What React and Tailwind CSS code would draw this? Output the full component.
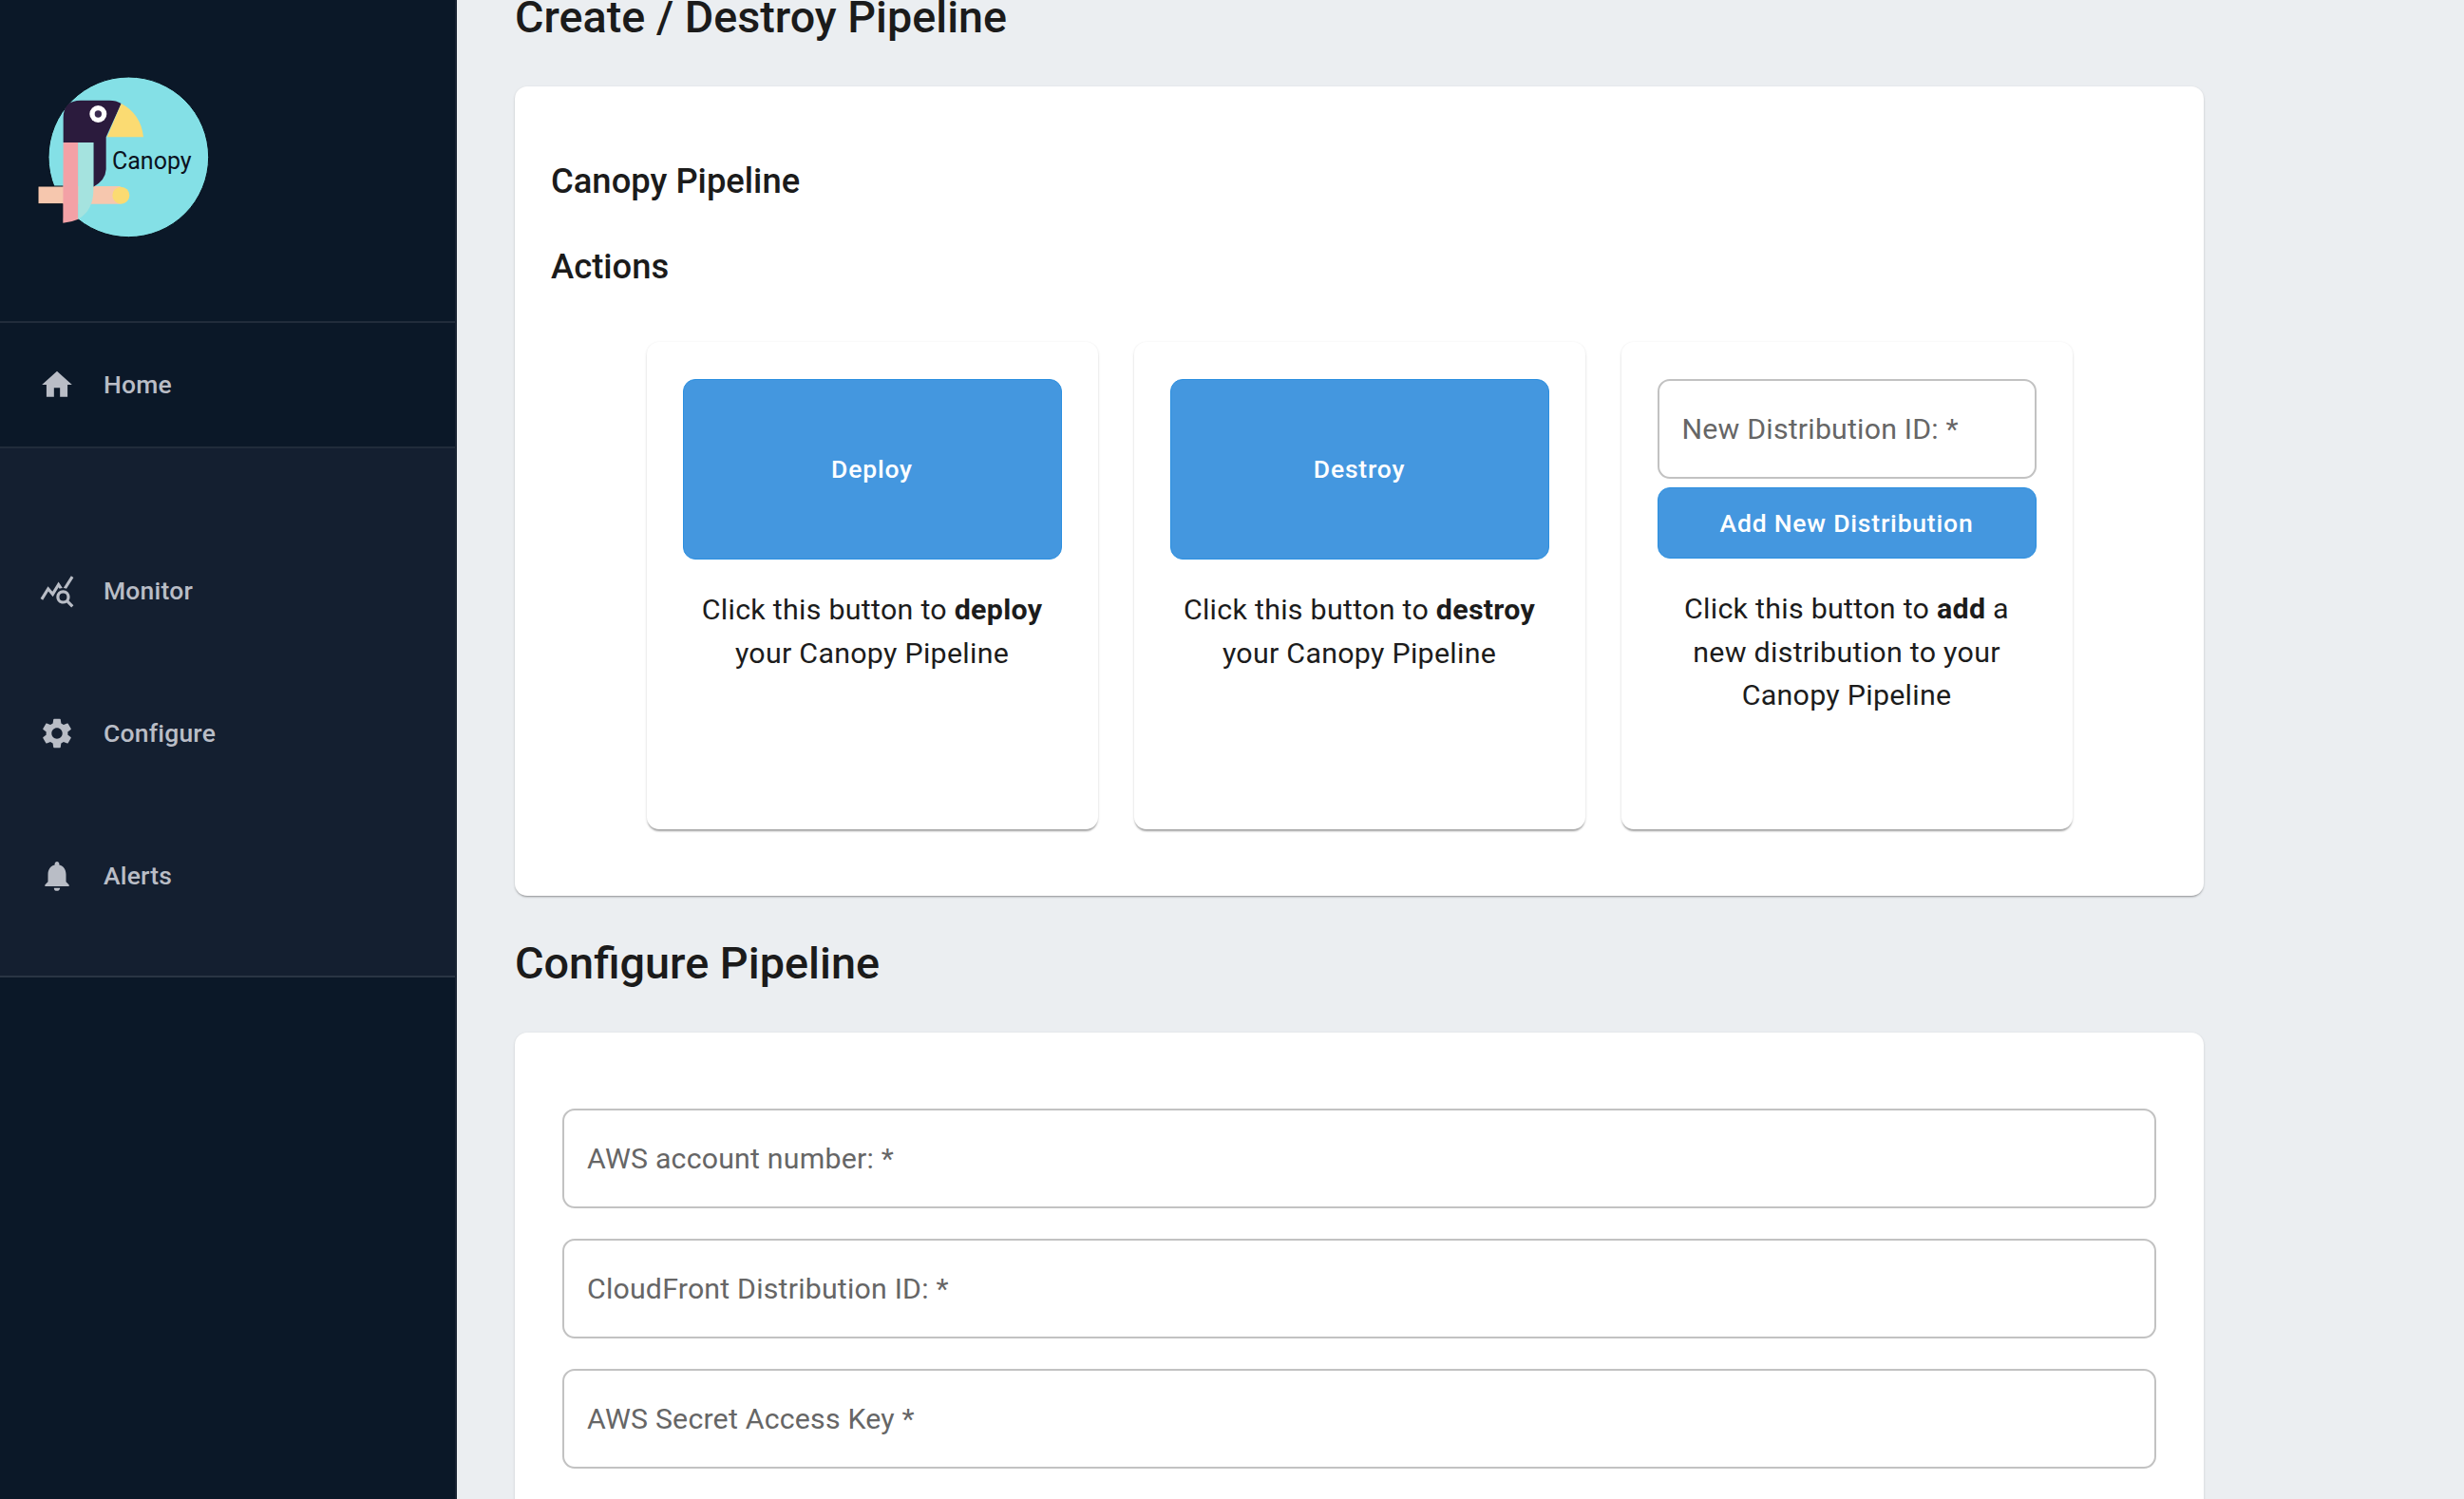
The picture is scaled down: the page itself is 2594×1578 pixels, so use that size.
import { MdHome, MdQueryStats, MdSettings, MdNotifications } from "react-icons/md";

const navItems = [
  { label: "Monitor", icon: MdQueryStats },
  { label: "Configure", icon: MdSettings },
  { label: "Alerts", icon: MdNotifications },
];

const fields = [
  "AWS account number: *",
  "CloudFront Distribution ID: *",
  "AWS Secret Access Key *",
  "",
];

function Logo() {
  return (
    <svg viewBox="0 0 900 720" className="w-[300px] h-[240px]">
      <circle cx="406" cy="376" r="253" fill="#84e0e6" stroke="#05101c" strokeWidth="3" />
      <path d="M120 468H380V524H120Z" fill="#f6c7ae" />
      <path d="M200 468H120V524H200" fill="none" stroke="#05101c" strokeWidth="3" />
      <circle cx="382" cy="497" r="27" fill="#fbdb72" />
      <path d="M200 330V252Q200 197 255 197H345Q368 197 383 207L335 313V415Q333 450 295 470V330Z" fill="#2b1b3d" />
      <path d="M383 207Q445 240 453 313H338Z" fill="#fbdb72" />
      <circle cx="310" cy="240" r="27" fill="#ffffff" />
      <circle cx="310" cy="240" r="11" fill="#3a2a50" />
      <path d="M200 330H247V572Q225 582 199 584Z" fill="#f3a1a6" />
      <path d="M247 330H295V480Q295 545 247 572Z" fill="#a5e3df" />
      <text x="354" y="415" fontFamily="Roboto, sans-serif" fontSize="75" fill="#0b1220">Canopy</text>
    </svg>
  );
}

function NavRow({ item }) {
  const Icon = item.icon;
  return (
    <div className="h-[150px] flex items-center pl-[41px] text-[#b9bdc6]">
      <Icon size={38} className="shrink-0" />
      <span className="ml-[30px] text-[26.5px] font-medium tracking-[0.2px]">{item.label}</span>
    </div>
  );
}

function ActionCard({ children, text }) {
  return (
    <div className="w-[475px] h-[513px] bg-white rounded-[13px] px-[38px] pt-[39px] shadow-[0_3px_2px_-1px_rgba(0,0,0,0.3),0_1px_3px_rgba(0,0,0,0.14)]">
      {children}
      <p className="mt-[30px] px-[6px] text-center text-[30.4px] leading-[45.5px] text-[#1c1c1c] tracking-[0.27px]">
        {text}
      </p>
    </div>
  );
}

function BigButton({ label }) {
  return (
    <button className="w-full h-[190px] rounded-[13px] bg-[#4497df] border border-[#2b8fe0] text-white text-[26.5px] font-medium tracking-[0.8px]">
      {label}
    </button>
  );
}

function Field({ label, className }) {
  return (
    <div className={"flex items-center rounded-[13px] border-2 border-[#c2c2c2] px-[24px] text-[30.3px] text-[#666666] tracking-[0.2px] " + className}>
      {label}
    </div>
  );
}

export default function App() {
  return (
    <div className="flex h-[1578px] overflow-hidden bg-[#ebeef1] font-['Roboto',sans-serif]">
      <aside className="w-[481px] shrink-0 bg-[#0b1828] border-r-2 border-[#1a2433]">
        <div className="h-[338px] pt-[40px]">
          <Logo />
        </div>
        <div className="h-[134px] flex items-center pl-[41px] border-y-2 border-[#212c3b] text-[#b9bdc6]">
          <MdHome size={38} className="shrink-0" />
          <span className="ml-[30px] text-[26.5px] font-medium tracking-[0.2px]">Home</span>
        </div>
        <div className="bg-[#141f30] pt-[75px] pb-[30px] border-b-2 border-[#2a3544]">
          {navItems.map((item) => (
            <NavRow key={item.label} item={item} />
          ))}
        </div>
      </aside>

      <main className="pl-[61px] w-[1839px] shrink-0">
        <h1 className="-mt-[8px] text-[46.7px] leading-[52px] font-medium text-[#1b1b1b]">
          Create / Destroy Pipeline
        </h1>

        <section className="mt-[47px] h-[852px] bg-white rounded-[13px] pt-[80px] px-[38px] shadow-[0_2px_2px_-1px_rgba(0,0,0,0.3),0_1px_3px_rgba(0,0,0,0.14)]">
          <h2 className="text-[36.4px] leading-[40px] font-medium text-[#1b1b1b]">Canopy Pipeline</h2>
          <h2 className="mt-[50px] text-[36.4px] leading-[40px] font-medium text-[#1b1b1b]">Actions</h2>

          <div className="mt-[59px] flex justify-center gap-[38px]">
            <ActionCard text={<>Click this button to <b>deploy</b> your Canopy Pipeline</>}>
              <BigButton label="Deploy" />
            </ActionCard>
            <ActionCard text={<>Click this button to <b>destroy</b> your Canopy Pipeline</>}>
              <BigButton label="Destroy" />
            </ActionCard>
            <ActionCard text={<>Click this button to <b>add</b> a new distribution to your Canopy Pipeline</>}>
              <Field label="New Distribution ID: *" className="h-[105px]" />
              <button className="mt-[9px] w-full h-[75px] rounded-[13px] bg-[#4497df] border border-[#2b8fe0] text-white text-[26.5px] font-medium tracking-[0.8px]">
                Add New Distribution
              </button>
            </ActionCard>
          </div>
        </section>

        <h1 className="mt-[45px] text-[46.8px] leading-[52px] font-medium text-[#1b1b1b]">Configure Pipeline</h1>

        <section className="mt-[47px] h-[700px] bg-white rounded-[13px] pt-[80px] px-[50px] flex flex-col gap-[32px] shadow-[0_1px_3px_rgba(0,0,0,0.14)]">
          {fields.map((label, i) => (
            <Field key={i} label={label} className="h-[105px] shrink-0" />
          ))}
        </section>
      </main>
    </div>
  );
}
